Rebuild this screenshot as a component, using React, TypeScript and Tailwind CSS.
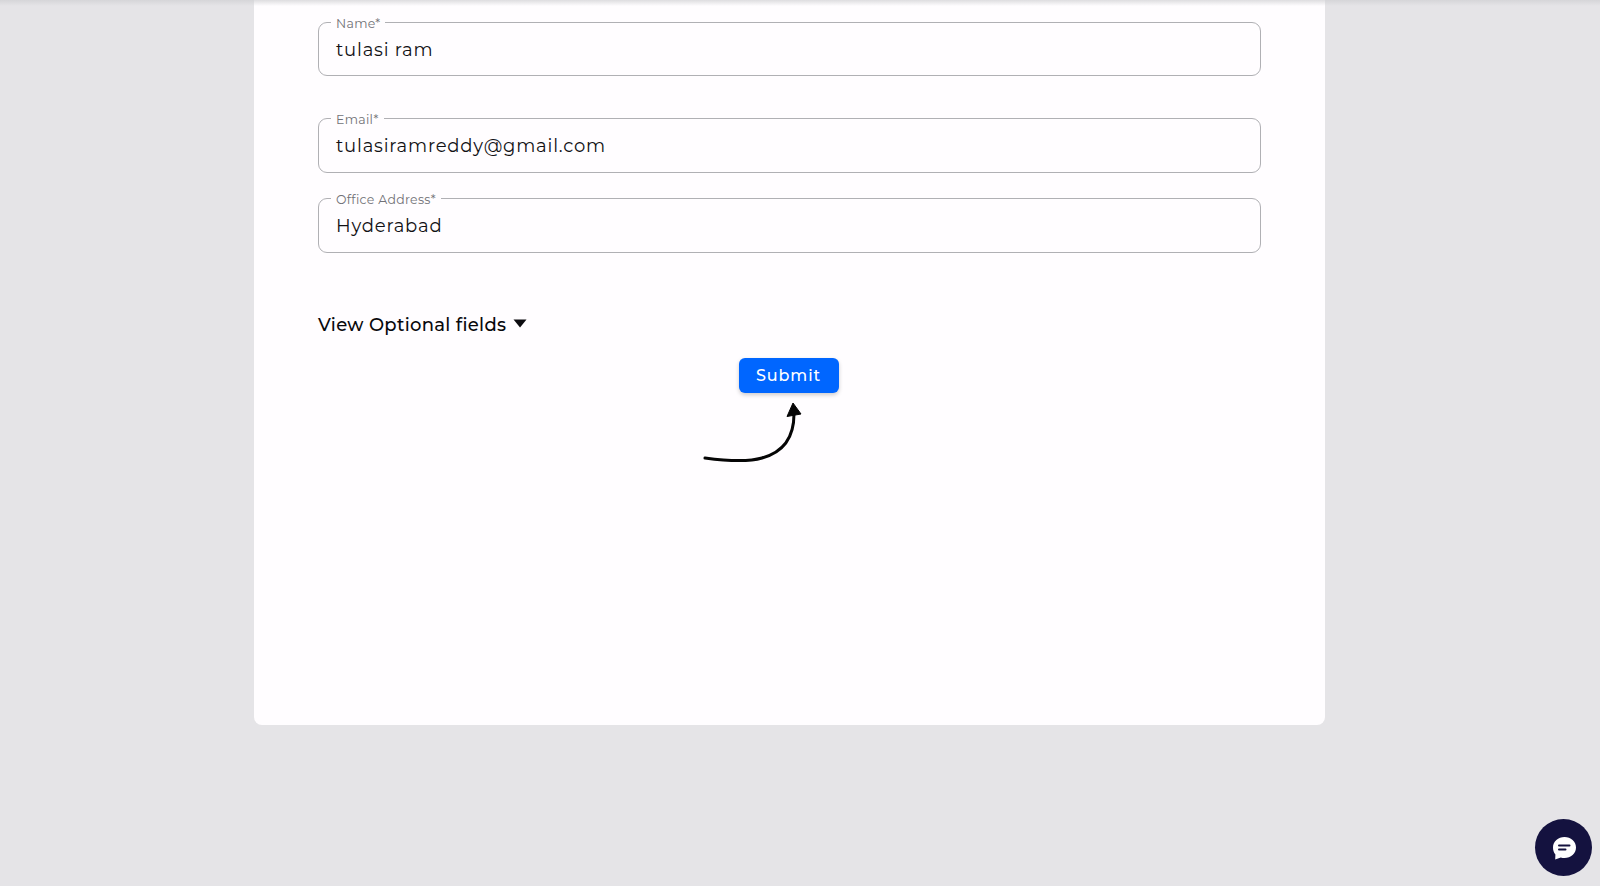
const fontStack = "font-['Montserrat','Inter','Noto_Sans',sans-serif]";

const Field = ({ label, value, className }: { label: string; value: string; className?: string }) => (
    <fieldset className={`border-[1.5px] border-[#b0b0b4] rounded-[9px] pl-[12px] pr-3 ${className ?? ''}`}>
        <legend className="px-[5px] translate-y-[1.5px] text-[12.5px] leading-[14px] tracking-[0.3px] text-[#717176]">{label}</legend>
        <div className="pl-[5px] pt-[9px] text-[18px] leading-[24px] tracking-[0.8px] text-[#111114]">{value}</div>
    </fieldset>
);

export default function App() {
    return (
        <div className={`relative h-[886px] overflow-hidden bg-[#e5e4e7] ${fontStack}`}>
            {/* top edge shadow */}
            <div className="absolute inset-x-0 top-0 h-[6px] bg-gradient-to-b from-[#cfcfd2] to-transparent opacity-70"></div>

            <div className="ml-[254px] w-[1071px] h-[725px] bg-[#fffdff] rounded-b-lg px-[64px] pt-[15px]">
                <Field label="Name*" value="tulasi ram" className="h-[61px]" />
                <Field label="Email*" value="tulasiramreddy@gmail.com" className="h-[62px] mt-[35px]" />
                <Field label="Office Address*" value="Hyderabad" className="h-[62px] mt-[18px]" />

                <div className="mt-[59px] flex items-center gap-[7px] text-[#08080c]">
                    <span className="text-[18px] leading-[26px] font-medium tracking-[0.3px]">View Optional fields</span>
                    <svg width="14" height="9" viewBox="0 0 14 9" className="-mt-[3px]">
                        <path d="M0.5 0.5H13.5L7 8.5Z" fill="#0c0c10" />
                    </svg>
                </div>

                <div className="relative mt-[20px] pr-[2px] flex justify-center">
                    <button className="w-[100px] h-[35px] pt-[1px] rounded-[6px] bg-[#0066ff] text-white text-[16px] tracking-[0.9px] font-medium shadow-[0_2px_4px_rgba(0,0,0,0.2)]">
                        Submit
                    </button>
                    {/* hand drawn arrow pointing at submit */}
                    <svg width="105" height="65" viewBox="0 0 105 65" fill="none" className="absolute left-[382px] top-[42px]">
                        <path d="M5 58C20 60 45 63 62 58C84 52 94 36 94 14" stroke="#050505" strokeWidth="3" strokeLinecap="round" />
                        <path d="M93 3L87 16.5L101 14Z" fill="#050505" stroke="#050505" strokeWidth="1" strokeLinejoin="round" />
                    </svg>
                </div>
            </div>

            <button className="absolute right-[8px] bottom-[10px] w-[57px] h-[57px] rounded-full bg-[#14123f] flex items-center justify-center">
                <svg width="24" height="24" viewBox="0 0 24 24">
                    <path d="M12.5 1C18.8 1 24 5.6 24 11.5C24 17.4 18.8 22 12.5 22C11.2 22 10 21.8 8.8 21.4L3.2 23.5L3.4 18.4C1.8 16.6 1 14.2 1 11.5C1 5.6 6.2 1 12.5 1Z" fill="#ffffff" />
                    <path d="M7 9.6H17.5M7 13.4H13.5" stroke="#14123f" strokeWidth="2" strokeLinecap="round" />
                </svg>
            </button>
        </div>
    );
}
